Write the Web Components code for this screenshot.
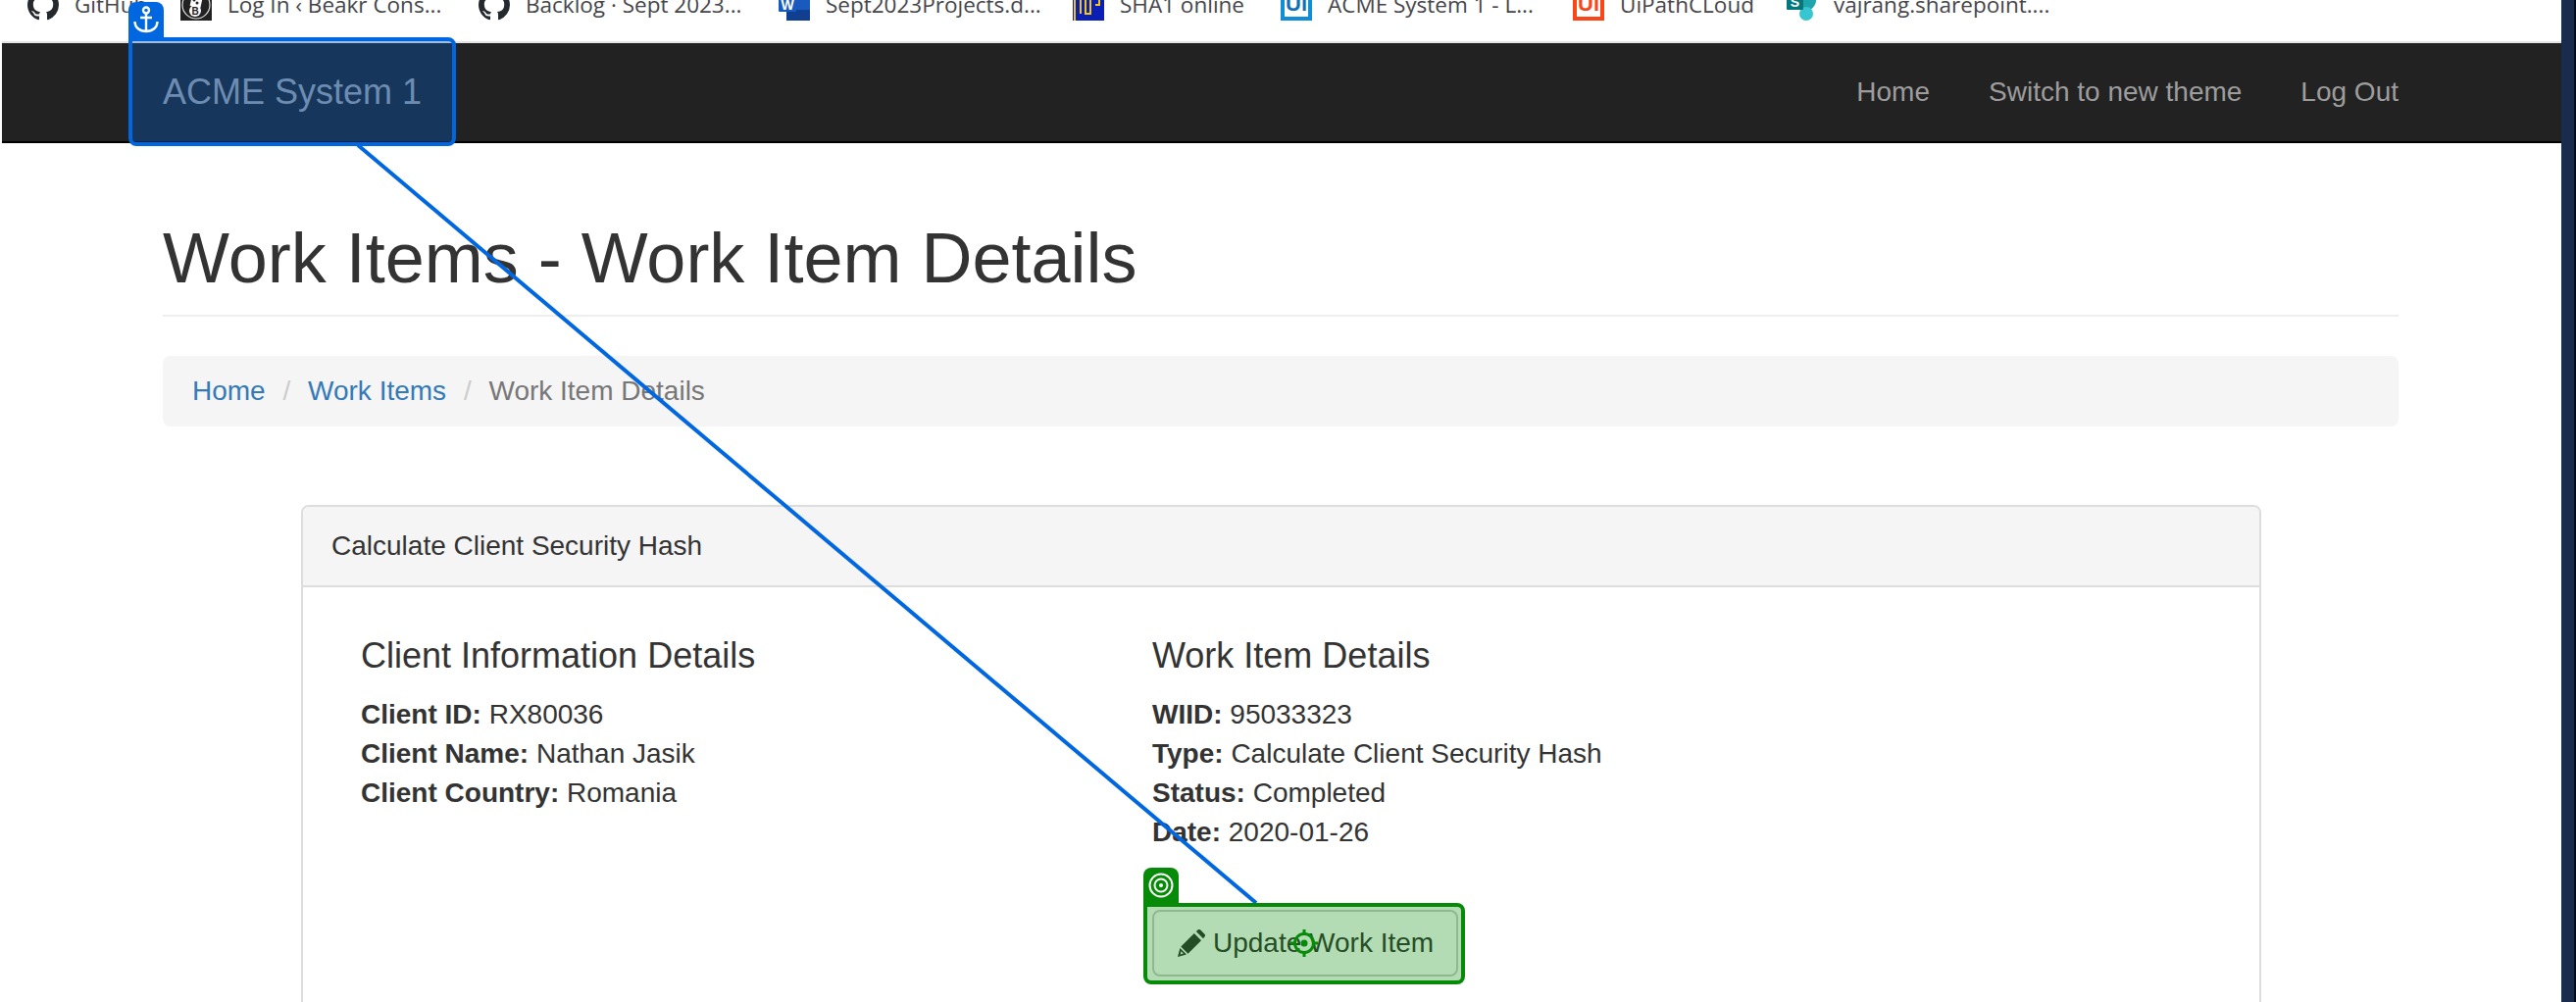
<!DOCTYPE html>
<html lang="en">
<head>
<meta charset="utf-8">
<title>Work Item Details</title>
<style>
  html, body { margin: 0; height: 1022px; overflow: hidden; background: #fff; }
  body { position: relative; display: flex; font-family: "Liberation Sans", Arial, sans-serif; font-size: 28px; line-height: 40px; color: #333; }
  #page { width: 2612px; flex: none; }
</style>
</head>
<body>
<div id="page">
  <bookmark-bar>
    <book-mark w="75" label="GitHub" icon="github"></book-mark>
    <book-mark w="223" label="Log In ‹ Beakr Cons..." icon="beakr"></book-mark>
    <book-mark w="225" label="Backlog · Sept 2023..." icon="github"></book-mark>
    <book-mark w="219" label="Sept2023Projects.d..." icon="word"></book-mark>
    <book-mark w="131" label="SHA1 online" icon="sha"></book-mark>
    <book-mark w="217" label="ACME System 1 - L..." icon="uiblue"></book-mark>
    <book-mark w="137" label="UiPathCLoud" icon="uired"></book-mark>
    <book-mark w="217" label="vajrang.sharepoint...." icon="share"></book-mark>
  </bookmark-bar>
  <top-nav brand="ACME System 1">
    <a>Home</a>
    <a>Switch to new theme</a>
    <a>Log Out</a>
  </top-nav>
  <page-content>
    <page-title>Work Items - Work Item Details</page-title>
    <crumb-bar></crumb-bar>
    <work-panel heading="Calculate Client Security Hash">
      <info-col title="Client Information Details">
        <div><b>Client ID:</b> RX80036</div>
        <div><b>Client Name:</b> Nathan Jasik</div>
        <div><b>Client Country:</b> Romania</div>
      </info-col>
      <info-col title="Work Item Details">
        <div><b>WIID:</b> 95033323</div>
        <div><b>Type:</b> Calculate Client Security Hash</div>
        <div><b>Status:</b> Completed</div>
        <div><b>Date:</b> 2020-01-26</div>
        <update-btn slot="action">Update Work Item</update-btn>
      </info-col>
    </work-panel>
  </page-content>
</div>
<scroll-strip></scroll-strip>
<anchor-wire></anchor-wire>
<select-box kind="anchor"></select-box>
<select-box kind="target"></select-box>

<script>
const ICONS = {
  github: `<path fill="#24292e" transform="scale(2)" fill-rule="evenodd" d="M8 0C3.58 0 0 3.58 0 8c0 3.54 2.29 6.53 5.47 7.59.4.07.55-.17.55-.38 0-.19-.01-.82-.01-1.49-2.01.37-2.53-.49-2.69-.94-.09-.23-.48-.94-.82-1.13-.28-.15-.68-.52-.01-.53.63-.01 1.08.58 1.23.82.72 1.21 1.87.87 2.33.66.07-.52.28-.87.51-1.07-1.78-.2-3.64-.89-3.64-3.95 0-.87.31-1.59.82-2.15-.08-.2-.36-1.02.08-2.12 0 0 .67-.21 2.2.82.64-.18 1.32-.27 2-.27.68 0 1.36.09 2 .27 1.53-1.04 2.2-.82 2.2-.82.44 1.1.16 1.92.08 2.12.51.56.82 1.27.82 2.15 0 3.07-1.87 3.75-3.65 3.95.29.25.54.73.54 1.48 0 1.07-.01 1.93-.01 2.2 0 .21.15.46.55.38A8.013 8.013 0 0016 8c0-4.42-3.58-8-8-8z"/>`,
  beakr: `<rect width="32" height="32" fill="#222"/><circle cx="16" cy="16" r="14" fill="none" stroke="#ddd" stroke-width="1.2"/><rect x="11" y="5" width="11" height="13" fill="#fff" transform="rotate(12 16 11)"/><circle cx="14" cy="11" r="1.5" fill="#222"/><circle cx="19" cy="9" r="1.5" fill="#222"/><circle cx="17" cy="14" r="1.5" fill="#222"/><circle cx="15" cy="22" r="6" fill="#fff"/><text x="15" y="26" font-size="10" font-weight="700" text-anchor="middle" font-family="Liberation Sans" fill="#222">B</text>`,
  word: `<rect x="8" y="0" width="24" height="32" rx="1" fill="#2b7cd3"/><rect x="8" y="11" width="24" height="10" fill="#185abd"/><rect x="8" y="21" width="24" height="11" fill="#103f91"/><rect x="0" y="8" width="18" height="15" rx="1" fill="#185abd"/><text x="9" y="20.500" font-size="14" font-weight="700" text-anchor="middle" font-family="Liberation Sans" fill="#fff">W</text>`,
  sha: `<rect width="32" height="32" fill="#0b1fb5"/><rect width="32" height="11" fill="#f3c614" opacity=".15"/><path d="M2 32V4M8 25V4h5v21h5V4M23 16h4V9h5" fill="none" stroke="#f3c614" stroke-width="2"/>`,
  uiblue: `<rect x="2" y="2" width="28" height="28" fill="#fff" stroke="#0f8dd6" stroke-width="4"/><text x="16" y="22" font-size="22" font-weight="700" text-anchor="middle" font-family="Liberation Sans" fill="#0f72b8">Ui</text>`,
  uired: `<rect x="2" y="2" width="28" height="28" fill="#fff" stroke="#fa4616" stroke-width="4"/><text x="16" y="22" font-size="22" font-weight="700" text-anchor="middle" font-family="Liberation Sans" fill="#fa4616">Ui</text>`,
  share: `<circle cx="19" cy="11" r="11" fill="#1fa5ad"/><circle cx="20" cy="25" r="7" fill="#37c6d0"/><rect x="0" y="4" width="17" height="17" rx="1" fill="#03787c"/><text x="8.500" y="18" font-size="14" font-weight="700" text-anchor="middle" font-family="Liberation Sans" fill="#fff">S</text>`
};

// small helper, every element here is the same shape: style + markup in an open root
function def(tag, css, html, extra) {
  customElements.define(tag, class extends HTMLElement {
    connectedCallback() {
      if (this.shadowRoot) return;
      this.attachShadow({mode: 'open'});
      this.shadowRoot.innerHTML = `<style>${css}</style>` + (typeof html === 'function' ? html(this) : html);
      if (extra) extra(this);
    }
  });
}

def('bookmark-bar', `
  :host { display: block; height: 42px; overflow: hidden; background: #fff; }
  .row { display: flex; gap: 33px; padding-left: 28px; margin-top: -11px; }
`, `<div class="row"><slot></slot></div>`);

def('book-mark', `
  :host { display: flex; align-items: flex-start; gap: 16px; height: 32px; }
  svg { width: 32px; height: 32px; flex: none; display: block; }
  span { font: 400 22.500px/32px "Open Sans", sans-serif; color: #45454a; white-space: nowrap; margin-top: 0; }
`, el => `<svg viewBox="0 0 32 32">${ICONS[el.getAttribute('icon')]}</svg><span style="width:${el.getAttribute('w')}px">${el.getAttribute('label')}</span>`);

def('top-nav', `
  :host { display: flex; justify-content: space-between; height: 100px; margin-left: 2px; background: #222; border-top: 2px solid #e4e4e4; border-bottom: 2px solid #000; padding: 0 166px 0 164px; color: #9d9d9d; }
  .brand { font-size: 36px; line-height: 100px; }
  nav { display: flex; gap: 60px; line-height: 100px; }
  ::slotted(a) { color: #9d9d9d; }
`, el => `<div class="brand">${el.getAttribute('brand')}</div><nav><slot></slot></nav>`);

def('page-content', `
  :host { display: block; padding: 78px 166px 0 166px; }
`, `<slot></slot>`);

def('page-title', `
  :host { display: block; font-size: 72px; line-height: 79px; padding-bottom: 18px; border-bottom: 2px solid #eee; margin-bottom: 40px; color: #333; }
`, `<slot></slot>`);

def('crumb-bar', `
  :host { display: flex; height: 72px; align-items: center; padding: 0 30px; background: #f5f5f5; border-radius: 8px; margin-bottom: 80px; }
  a { color: #337ab7; }
  i { font-style: normal; color: #ccc; padding: 0 10px; margin: 0 0; }
  span { color: #777; }
`, `<a>Home</a><i>&nbsp;/&nbsp;</i><a>Work Items</a><i>&nbsp;/&nbsp;</i><span>Work Item Details</span>`);

def('work-panel', `
  :host { display: block; margin: 0 140px 0 141px; border: 2px solid #ddd; border-radius: 8px; padding-bottom: 200px; }
  header { height: 80px; line-height: 80px; padding: 0 29px; background: #f5f5f5; border-bottom: 2px solid #ddd; border-radius: 6px 6px 0 0; }
  .grid { display: grid; grid-template-columns: 807px 1fr; padding: 50px 59px 0; }
`, el => `<header>${el.getAttribute('heading')}</header><div class="grid"><slot></slot></div>`);

def('info-col', `
  :host { display: block; }
  h4 { margin: 0 0 20px; font-size: 36px; line-height: 40px; font-weight: 400; }
  .act { margin-top: 59px; }
`, el => `<h4>${el.getAttribute('title')}</h4><slot></slot><div class="act"><slot name="action"></slot></div>`);

def('update-btn', `
  :host { display: inline-flex; align-items: center; gap: 8px; height: 68px; box-sizing: border-box; width: 312px; padding: 0 24px; border: 2px solid #ccc; border-radius: 8px; background: #fff; color: #333; white-space: nowrap; }
  svg { width: 28px; height: 28px; flex: none; fill: #333; }
`, `<svg viewBox="0 0 28 28"><path fill-rule="evenodd" d="M18.800 2l1.700-1.400a2 2 0 0 1 2.800 0l4.100 4.100a2 2 0 0 1 0 2.800L26 9.200zM16.800 4L24 11.200 10.500 24.700 3.300 17.500zM2.400 19l6.600 6.600L0 28zM3.600 22.200l-1 3.200 3.200-.9z"/></svg><span><slot></slot></span>`);

def('scroll-strip', `
  :host { display: block; flex: none; width: 13px; height: 1022px; background: #1a2c4e; border-right: 2px solid #050a18; }
`, ``);

def('anchor-wire', `
  :host { position: absolute; left: 0; top: 0; width: 2627px; height: 1022px; pointer-events: none; }
  svg { display: block; }
`, `<svg width="2627" height="1022"><line x1="365" y1="148" x2="1281" y2="921" stroke="#0067e0" stroke-width="4"/></svg>`);

const ANCHOR = `<svg width="28" height="28" viewBox="0 0 28 28" fill="none" stroke="#fff" stroke-width="2.400"><circle cx="14" cy="4.500" r="3"/><path d="M14 7.500V26M8 12h12M2.500 16c0 6 5 10 11.500 10s11.500-4 11.500-10"/></svg>`;
const TARGET = `<svg width="26" height="26" viewBox="0 0 26 26" fill="none" stroke="#fff" stroke-width="2"><circle cx="13" cy="13" r="11.500"/><circle cx="13" cy="13" r="6.500"/><circle cx="13" cy="13" r="2" fill="#fff" stroke="none"/></svg>`;
const CROSS = `<svg class="cross" width="30" height="30" viewBox="0 0 30 30" fill="none" stroke="#078a07" stroke-width="3"><circle cx="15" cy="15" r="9.500"/><path d="M15 1v5M15 24v5M1 15h5M24 15h5"/><circle cx="15" cy="15" r="3.500" fill="#078a07" stroke="none"/></svg>`;

def('select-box', `
  :host { position: absolute; box-sizing: border-box; border: 4px solid var(--c); border-radius: 0 8px 8px 8px; background: var(--f); }
  :host([kind=anchor]) { --c: #0067e0; --f: rgba(0,103,224,.3); left: 131px; top: 38px; width: 334px; height: 111px; }
  :host([kind=target]) { --c: #078a07; --f: rgba(8,138,8,.3); left: 1166px; top: 921px; width: 328px; height: 83px; }
  .tab { position: absolute; left: -4px; top: -40px; width: 36px; height: 36px; background: var(--c); border-radius: 8px 8px 0 0; display: flex; align-items: center; justify-content: center; }
  .cross { position: absolute; left: 145px; top: 22px; }
`, el => {
  const k = el.getAttribute('kind');
  return `<div class="tab">${k === 'anchor' ? ANCHOR : TARGET}</div>${k === 'target' ? CROSS : ''}`;
});
</script>
</body>
</html>
